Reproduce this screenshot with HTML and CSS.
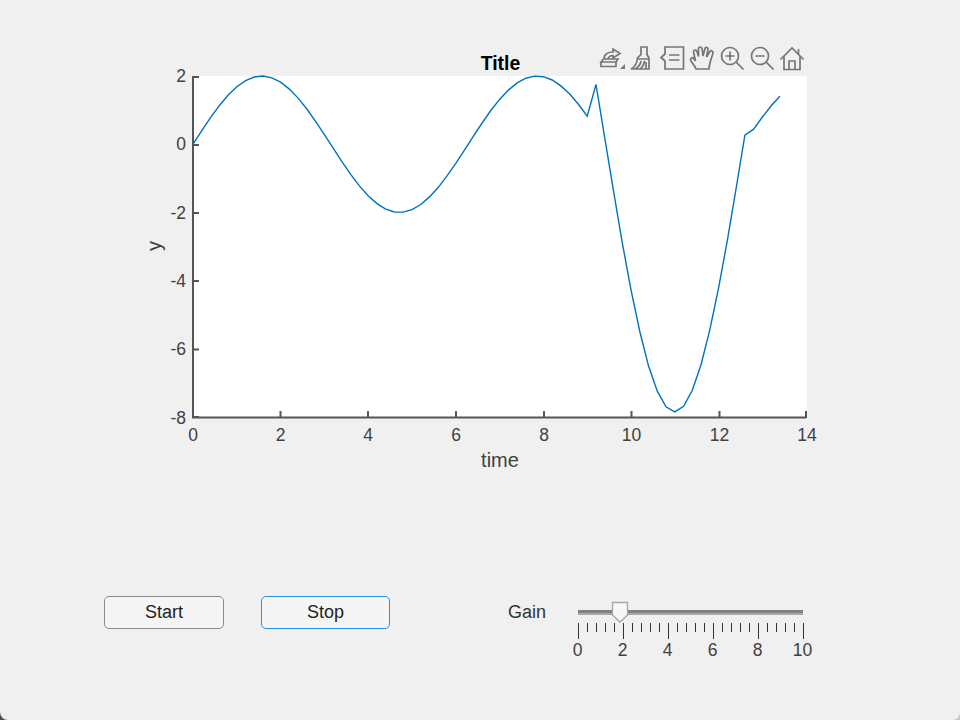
FILE: index.html
```html
<!DOCTYPE html>
<html lang="en">
  <head>
    <meta charset="UTF-8" />
    <meta name="viewport" content="width=device-width, initial-scale=1.0" />
    <title>Gain demo</title>
    <link rel="stylesheet" href="styles.css">
  </head>
  <body>
    <div class="window">
      <div class="chart">
        <svg class="plot" width="960" height="480" viewBox="0 0 960 480">
          <rect class="plot-bg" x="193" y="76" width="614" height="341" />
          <polyline class="plot-line" id="plotLine" points="" />
          <path class="axis" d="M193 76V417.500H806M193 77H199M193 145H199M193 213H199M193 281H199M193 349.500H199M193 417H199M280.500 417V411M368 417V411M456 417V411M544 417V411M631.500 417V411M719.500 417V411M806 418V411" />
          <g class="tick-y">
            <text x="186" y="82">2</text>
            <text x="186" y="150">0</text>
            <text x="186" y="219">-2</text>
            <text x="186" y="287">-4</text>
            <text x="186" y="355">-6</text>
            <text x="186" y="424">-8</text>
          </g>
          <g class="tick-x">
            <text x="193" y="441">0</text>
            <text x="280.500" y="441">2</text>
            <text x="368" y="441">4</text>
            <text x="456" y="441">6</text>
            <text x="544" y="441">8</text>
            <text x="631.500" y="441">10</text>
            <text x="719.500" y="441">12</text>
            <text x="807" y="441">14</text>
          </g>
          <text class="plot-title" x="500.500" y="70">Title</text>
          <text class="axis-label" x="500" y="467">time</text>
          <text class="axis-label" transform="translate(161 246) rotate(-90)">y</text>
        </svg>

        <div class="toolbar">
          <svg class="tool" viewBox="0 0 24 24">
            <path d="M1 16L3.500 13H18L16 16ZM1 16V20.500H16V16" />
            <path d="M4 13C4 8 8 6 13 6V3L20 7.500L13 12V9.500C10 9.500 8.500 11 8 13" />
            <path class="tool-fill" d="M25 18V23H20Z" />
          </svg>
          <svg class="tool" viewBox="0 0 24 24">
            <path d="M11 1H17V8.500L19 12V23H1C5 21 7 17 7.500 12L11 8.500Z" />
            <path d="M7.500 13H19M5 23C9 21 10.500 18 11 15M10 23C13 21 14 18 14.500 15M16 23V16" />
          </svg>
          <svg class="tool" viewBox="0 0 24 24">
            <path d="M5 1H23.500V23H5V15L1 11.500L5 8Z" />
            <path d="M9 9H19.500M9 14H19.500" />
          </svg>
          <svg class="tool" viewBox="0 0 24 24">
            <path d="M6 23C5 19.500 2 17.500 0.500 14C0 12 2.500 11 3.500 12.500L5.500 15L3.500 6C3.500 3.500 6.500 3.500 7 5.500L8.500 10.500L8.500 2.500C8.500 0.500 11.500 0.500 12 2.500L13 10L15 2.500C15.500 0.800 18.500 1.200 18 3.500L16.500 11L20 5.500C21 4 23.500 5 23 7C22 11 20.500 14 20 17C19.500 19 19 21 19 23Z" />
          </svg>
          <svg class="tool" viewBox="0 0 24 24">
            <circle cx="10" cy="10" r="8.500" />
            <path d="M16.200 16.200L23.500 23.500M5.500 10H14.500M10 5.500V14.500" />
          </svg>
          <svg class="tool" viewBox="0 0 24 24">
            <circle cx="10" cy="10" r="8.500" />
            <path d="M16.200 16.200L23.500 23.500M5.500 10H14.500" />
          </svg>
          <svg class="tool" viewBox="0 0 24 24">
            <path d="M0.500 13.500L12 2L23.500 13.500M18.500 3V8M4 10.500V23.500H20V10.500M9 23.500V15H15V23.500" />
          </svg>
        </div>
      </div>

      <div class="controls">
        <button class="btn btn-start">Start</button>
        <button class="btn btn-stop">Stop</button>
        <span class="gain-label">Gain</span>
        <svg class="slider" width="250" height="70" viewBox="570 596 250 70">
          <rect class="slider-track" x="578" y="610" width="225" height="5" />
          <rect class="slider-track-light" x="578" y="613" width="225" height="2" />
          <path class="slider-ticks" id="sliderTicks" d="" />
          <path class="slider-thumb" d="M612.500 602.500H627.500V615L620 622L612.500 615Z" />
          <g class="tick-x">
            <text x="577.500" y="656">0</text>
            <text x="622.500" y="656">2</text>
            <text x="667.500" y="656">4</text>
            <text x="712.500" y="656">6</text>
            <text x="757.500" y="656">8</text>
            <text x="802.500" y="656">10</text>
          </g>
        </svg>
      </div>
    </div>

    <script src="plot.js"></script>
  </body>
</html>
```

FILE: styles.css
```css
:root {
  --panel-color: #f0f0f0;
  --text-color: #404040;
  --line-color: #0072bd;
  --tool-color: #757575;
}

html {
  height: 100%;
  background: linear-gradient(to right, #5c4c38, #c9c9c9);
}

body {
  margin: 0;
  font-family: "Liberation Sans", Arial, sans-serif;
}

.window {
  height: 720px;
  overflow: hidden;
  background-color: var(--panel-color);
  border-radius: 0 0 8px 8px;
}

.chart {
  position: relative;
  height: 480px;
}

.plot {
  display: block;
}

.plot-bg {
  fill: #fff;
}

.plot-line {
  fill: none;
  stroke: var(--line-color);
  stroke-width: 1.4;
}

.axis {
  fill: none;
  stroke: #555;
  stroke-width: 2;
}

.tick-y text,
.tick-x text {
  font-size: 17.500px;
  fill: var(--text-color);
}

.tick-y text {
  text-anchor: end;
}

.tick-x text {
  text-anchor: middle;
}

.plot-title {
  font-size: 19.500px;
  font-weight: bold;
  text-anchor: middle;
  fill: #000;
}

.axis-label {
  font-size: 20px;
  text-anchor: middle;
  fill: var(--text-color);
}

/* Figure toolbar, sits over the top right of the plot */
.toolbar {
  position: absolute;
  top: 46px;
  left: 600px;
  display: flex;
  gap: 6px;
}

.tool {
  width: 24px;
  height: 24px;
  overflow: visible;
  fill: none;
  stroke: var(--tool-color);
  stroke-width: 1.700;
}

.tool-fill {
  fill: var(--tool-color);
  stroke: none;
}

.controls {
  display: flex;
  align-items: flex-start;
  margin-top: 116px;
  padding-left: 104px;
}

.btn {
  height: 33px;
  padding: 0;
  background-color: #f5f5f5;
  border: 1px solid #8a8a8a;
  border-radius: 5px;
  font-family: inherit;
  font-size: 18px;
  color: #222;
}

.btn-start {
  width: 120px;
}

.btn-stop {
  width: 129px;
  margin-left: 37px;
  border-color: #2b8fe0;
}

.gain-label {
  width: 62px;
  margin-left: 118px;
  padding-top: 6px;
  font-size: 18px;
  color: #333;
}

.slider {
  display: block;
}

.slider-track {
  fill: #808080;
}

.slider-track-light {
  fill: #a8a8a8;
}

.slider-ticks {
  fill: none;
  stroke: #333;
  stroke-width: 1;
}

.slider-thumb {
  fill: #f7f7f7;
  stroke: #a6a6a6;
  stroke-width: 1.300;
}
```

FILE: plot.js
```js
// y = gain * sin(t), gain was moved twice while the plot ran
function gainAt(t) {
  if (t < 9.1) return 2;
  if (t < 12.7) return 7.85;
  return 1.9;
}

const points = [];
for (let i = 0; i <= 67; i++) {
  const t = i * 0.2;
  const y = gainAt(t) * Math.sin(t);
  const px = 193 + t * 43.8;
  const py = 76 + (2 - y) * 34.1;
  points.push(px.toFixed(1) + "," + py.toFixed(1));
}
document.getElementById("plotLine").setAttribute("points", points.join(" "));

let ticks = "";
for (let i = 0; i <= 25; i++) {
  const x = 578.5 + i * 9;
  const bottom = i % 5 === 0 ? 639 : 632;
  ticks += "M" + x + " 623V" + bottom;
}
document.getElementById("sliderTicks").setAttribute("d", ticks);
```
